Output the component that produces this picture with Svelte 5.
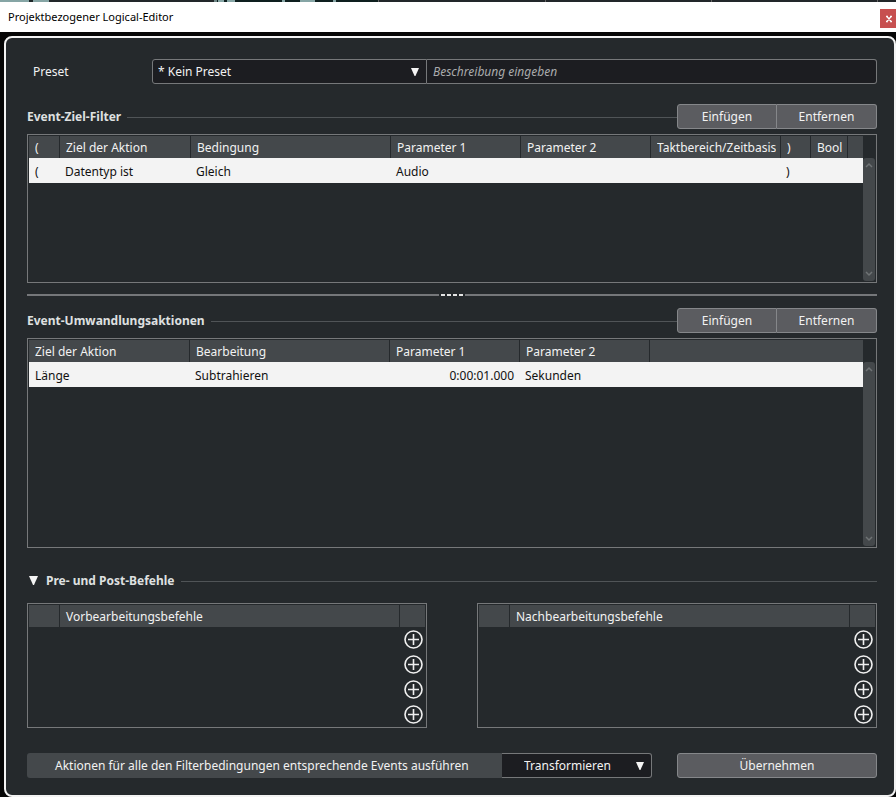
<script>
  const presets = ['* Kein Preset'];
  const actions = ['Transformieren'];

  const filterColumns = [
    { label: '(', width: 31 },
    { label: 'Ziel der Aktion', width: 131 },
    { label: 'Bedingung', width: 200 },
    { label: 'Parameter 1', width: 130 },
    { label: 'Parameter 2', width: 130 },
    { label: 'Taktbereich/Zeitbasis', width: 130 },
    { label: ')', width: 30 },
    { label: 'Bool', width: 37 },
    { label: '' }
  ];
  const filterRows = [['(', 'Datentyp ist', 'Gleich', 'Audio', '', '', ')', '', '']];

  const actionColumns = [
    { label: 'Ziel der Aktion', width: 161 },
    { label: 'Bearbeitung', width: 200 },
    { label: 'Parameter 1', width: 130, numeric: true },
    { label: 'Parameter 2', width: 130 },
    { label: '' }
  ];
  const actionRows = [['Länge', 'Subtrahieren', '0:00:01.000', 'Sekunden', '']];

  const commandLists = ['Vorbearbeitungsbefehle', 'Nachbearbeitungsbefehle'];
  const slots = [1, 2, 3, 4];

  let description = $state('');
  let expanded = $state(true);
</script>

{#snippet triangle()}
  <svg class="triangle" viewBox="0 0 9 9" aria-hidden="true"><path d="M0 0H9L5 9H4Z" /></svg>
{/snippet}

{#snippet heading(title)}
  <div class="heading">
    <h2>{title}</h2>
    <span class="rule"></span>
    <div class="pair">
      <button type="button">Einfügen</button>
      <button type="button">Entfernen</button>
    </div>
  </div>
{/snippet}

{#snippet list(columns, rows, name)}
  <div class="panel {name}">
    <table>
      <colgroup>
        {#each columns as column}
          <col style:width={column.width ? `${column.width}px` : null} />
        {/each}
      </colgroup>
      <thead>
        <tr>
          {#each columns as column}
            <th scope="col"><div class="clip">{column.label}</div></th>
          {/each}
        </tr>
      </thead>
      <tbody>
        {#each rows as row}
          <tr>
            {#each row as cell, i}
              <td class:numeric={columns[i].numeric}>{cell}</td>
            {/each}
          </tr>
        {/each}
      </tbody>
    </table>
    <div class="scrollbar" aria-hidden="true">
      <svg viewBox="0 0 8 6"><path d="M1 5L4 2L7 5" /></svg>
      <svg viewBox="0 0 8 6"><path d="M1 1L4 4L7 1" /></svg>
    </div>
  </div>
{/snippet}

<div class="window">
  <div class="backdrop"></div>
  <header class="titlebar">
    <h1>Projektbezogener Logical-Editor</h1>
    <button class="close" type="button" aria-label="Schließen">
      <svg viewBox="0 0 6 6" aria-hidden="true"><path d="M0 0.5H2M4 0.5H6M0 5.5H2M4 5.5H6M1 0.5L5 5.5M5 0.5L1 5.5" /></svg>
    </button>
  </header>

  <div class="surround">
    <main>
      <div class="preset">
        <label for="preset">Preset</label>
        <div class="select preset-select">
          <select id="preset">
            {#each presets as preset}<option>{preset}</option>{/each}
          </select>
          {@render triangle()}
        </div>
        <input type="text" aria-label="Beschreibung" placeholder="Beschreibung eingeben" bind:value={description} />
      </div>

      {@render heading('Event-Ziel-Filter')}
      {@render list(filterColumns, filterRows, 'filter')}

      <div class="splitter" role="separator"><i></i><i></i><i></i><i></i></div>

      {@render heading('Event-Umwandlungsaktionen')}
      {@render list(actionColumns, actionRows, 'actions')}

      <div class="heading commands-heading">
        <button class="toggle" type="button" aria-expanded={expanded} onclick={() => (expanded = !expanded)}>
          {@render triangle()}
          Pre- und Post-Befehle
        </button>
        <span class="rule"></span>
      </div>

      {#if expanded}
        <div class="commands">
          {#each commandLists as title}
            <div class="panel">
              <table class="slots">
                <thead>
                  <tr>
                    <th class="index"></th>
                    <th scope="col">{title}</th>
                    <th class="add"></th>
                  </tr>
                </thead>
                <tbody>
                  {#each slots as slot}
                    <tr>
                      <td></td>
                      <td></td>
                      <td>
                        <button class="plus" type="button" aria-label="{title} {slot} hinzufügen">
                          <svg viewBox="0 0 19 19" aria-hidden="true">
                            <circle cx="9.5" cy="9.5" r="8.5" />
                            <path d="M9.5 4V15M4 9.5H15" />
                          </svg>
                        </button>
                      </td>
                    </tr>
                  {/each}
                </tbody>
              </table>
            </div>
          {/each}
        </div>
      {/if}

      <footer>
        <label for="action">Aktionen für alle den Filterbedingungen entsprechende Events ausführen</label>
        <div class="select action-select">
          <select id="action">
            {#each actions as action}<option>{action}</option>{/each}
          </select>
          {@render triangle()}
        </div>
        <button class="apply" type="button">Übernehmen</button>
      </footer>
    </main>
  </div>
</div>

<style>
  :global(body) {
    background: #060606;
  }

  .window {
    display: flex;
    flex-direction: column;
    min-height: 100vh;
    font: 12px/18px 'Segoe UI', 'Noto Sans', sans-serif;
    color: #f2f2f2;
  }

  .window *,
  .window {
    box-sizing: border-box;
  }

  button,
  select,
  input {
    font: inherit;
    color: inherit;
    margin: 0;
    padding: 0;
    border: 0;
    outline: 0;
    background: none;
  }

  .backdrop {
    height: 2px;
    background: linear-gradient(
      90deg,
      #86a5a5 0 29px, #1d2628 29px 33px, #86a5a5 33px 49px, #22272a 49px 214px,
      #6f8786 214px 217px, #0e1f1f 217px 218px, #86a5a5 218px 224px, #0e1f1f 224px 227px,
      #86a5a5 227px 235px, #0e1f1f 235px 282px, #86a5a5 282px 285px, #0e1f1f 285px 300px,
      #86a5a5 300px 315px, #0e1f1f 315px 333px, #86a5a5 333px 336px, #0e1f1f 336px 378px,
      #666 378px 379px, #22272a 379px 545px, #666 545px 546px, #22272a 546px 711px,
      #666 711px 712px, #22272a 712px 877px, #666 877px 878px, #22272a 878px
    );
  }

  .titlebar {
    display: flex;
    align-items: center;
    height: 30px;
    padding-left: 8px;
    background: #fff;
    color: #000;
  }

  h1 {
    flex: 1;
    margin: 0;
    font-size: 11px;
    font-weight: 400;
  }

  .close {
    display: grid;
    place-items: center;
    width: 16px;
    height: 19px;
    margin-top: 3px;
    background: #c75050;
  }

  .close svg {
    width: 6px;
    height: 6px;
    margin-left: 2px;
    overflow: visible;
    stroke: #fff;
    stroke-width: 1.3;
    fill: none;
  }

  .surround {
    display: flex;
    flex: 1;
    padding: 4px 0 0 4px;
    background: #060606;
  }

  main {
    display: flex;
    flex-direction: column;
    flex: 1;
    min-width: 0;
    padding: 21px 17px 17px 21px;
    border: 2px solid #f3f3f3;
    border-radius: 8px;
    background: #25292c;
  }

  .preset {
    display: flex;
    align-items: center;
    height: 25px;
    margin-bottom: 20px;
  }

  .preset label {
    width: 125px;
    padding-left: 6px;
  }

  .select {
    position: relative;
    flex: none;
    height: 25px;
    border: 1px solid #76787a;
    background: #1c1d21;
  }

  select {
    appearance: none;
    width: 100%;
    height: 100%;
  }

  .triangle {
    width: 9px;
    height: 9px;
    fill: #f4f4f4;
  }

  .select .triangle {
    position: absolute;
    right: 7px;
    top: 8px;
    width: 8px;
    height: 8px;
    pointer-events: none;
  }

  .preset-select {
    width: 275px;
    border-radius: 3px 0 0 3px;
  }

  .preset-select select {
    padding-left: 5px;
  }

  input {
    flex: 1;
    min-width: 0;
    height: 25px;
    padding: 0 6px;
    border: 1px solid #76787a;
    border-left: 0;
    border-radius: 0 3px 3px 0;
    background: #1c1d21;
  }

  input::placeholder {
    color: #a9abac;
    font-style: italic;
    opacity: 1;
  }

  .heading {
    display: flex;
    align-items: center;
    height: 25px;
    margin-bottom: 5px;
  }

  h2,
  .toggle {
    margin: 0;
    font-size: 12px;
    font-weight: 700;
    color: #dfe0e0;
  }

  .toggle {
    display: flex;
    align-items: center;
    gap: 8px;
    padding-left: 2px;
  }

  .toggle[aria-expanded='false'] .triangle {
    transform: rotate(-90deg);
  }

  .rule {
    flex: 1;
    height: 1px;
    margin: 1px 0 0 6px;
    background: #505457;
  }

  .pair {
    display: grid;
    grid-template-columns: 1fr 1fr;
    width: 200px;
  }

  .pair button,
  .apply {
    height: 25px;
    border: 1px solid #85878a;
    background: #5b5c60;
  }

  .pair button {
    border-left: 0;
    border-radius: 0 3px 3px 0;
  }

  .pair button:first-child {
    border-left: 1px solid #85878a;
    border-radius: 3px 0 0 3px;
  }

  .panel {
    display: flex;
    align-items: flex-start;
    padding: 1px;
    border: 1px solid #76787a;
  }

  .filter {
    min-height: 149px;
  }

  .actions {
    flex: 1;
    min-height: 210px;
  }

  table {
    flex: 1;
    width: 100%;
    min-width: 0;
    table-layout: fixed;
    border-collapse: separate;
    border-spacing: 0;
  }

  th {
    height: 22px;
    padding: 2px 4px 0 6px;
    border-right: 1px solid #25292c;
    background: #44484b;
    font-weight: 400;
    text-align: left;
    white-space: nowrap;
  }

  th:last-child {
    border-right: 0;
  }

  .clip {
    overflow: hidden;
  }

  td {
    height: 25px;
    padding: 2px 6px 0 5px;
    background: #f3f3f3;
    color: #111;
    white-space: nowrap;
  }

  td:first-child {
    padding-left: 6px;
  }

  .numeric {
    text-align: right;
  }

  .scrollbar {
    display: flex;
    flex: none;
    flex-direction: column;
    justify-content: space-between;
    align-items: center;
    align-self: stretch;
    width: 12px;
    margin-top: 22px;
    padding: 4px 0;
    border-radius: 3px;
    background: #44484b;
  }

  .scrollbar svg {
    width: 8px;
    height: 6px;
    fill: none;
    stroke: #6f7375;
    stroke-width: 1.5;
  }

  .splitter {
    display: flex;
    align-items: center;
    gap: 2px;
    height: 2px;
    margin: 11px 0 12px;
  }

  .splitter::before,
  .splitter::after {
    content: '';
    flex: 1;
    height: 2px;
    background: #75777a;
  }

  .splitter i {
    width: 4px;
    height: 2px;
    background: #e4e4e4;
  }

  .commands-heading {
    margin: 20px 0 10px;
  }

  .commands {
    display: grid;
    grid-template-columns: 1fr 1fr;
    gap: 50px;
    margin-bottom: 25px;
  }

  .commands .panel {
    padding-bottom: 0;
  }

  .slots td,
  .slots td:first-child {
    padding: 0;
    background: none;
    line-height: 0;
  }

  .index {
    width: 31px;
  }

  .add {
    width: 25px;
  }

  .plus {
    display: block;
    width: 19px;
    height: 19px;
    margin-left: 4px;
  }

  .plus svg {
    width: 19px;
    height: 19px;
    fill: none;
    stroke: #f0f0f0;
    stroke-width: 1.6;
  }

  footer {
    display: flex;
    height: 25px;
  }

  footer label {
    flex: 1;
    min-width: 0;
    padding: 4px 28px 3px;
    border-radius: 3px 0 0 3px;
    background: #44484b;
    white-space: nowrap;
  }

  .action-select {
    width: 150px;
    border-left: 0;
    border-radius: 0 3px 3px 0;
  }

  .action-select select {
    padding-left: 22px;
  }

  .apply {
    flex: none;
    width: 200px;
    margin-left: 25px;
    border-radius: 3px;
  }
</style>
